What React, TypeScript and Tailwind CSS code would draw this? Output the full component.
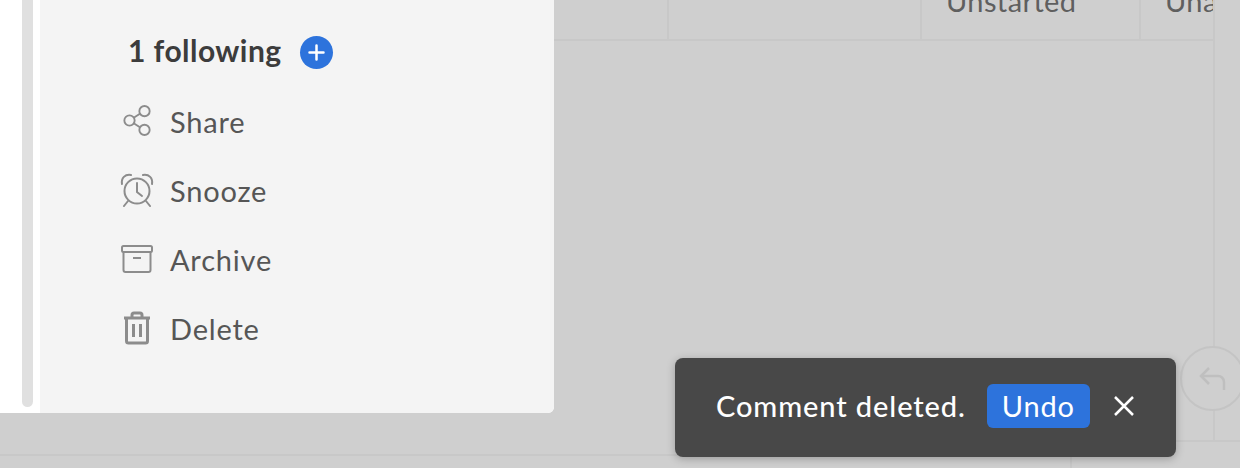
import React from "react";

const font = { fontFamily: '"Lato", "Noto Sans", sans-serif' };

function ShareIcon() {
    return (
        <svg width="30" height="33" viewBox="0 0 32 34" fill="none" stroke="#8c8c8c" strokeWidth="2">
            <circle cx="8" cy="17" r="5.5" />
            <circle cx="24" cy="7" r="5.5" />
            <circle cx="24" cy="27" r="5.5" />
            <path d="M12.5 14 L19.5 9.5 M12.5 20 L19.5 24.5" />
        </svg>
    );
}

function SnoozeIcon() {
    return (
        <svg width="34" height="34" viewBox="0 0 34 34" fill="none" stroke="#8c8c8c" strokeWidth="2" strokeLinecap="round">
            <circle cx="17" cy="18" r="12.5" />
            <path d="M17 10 V19 L22 23" />
            <path d="M2 11 C1 5 5 1 11 2 M32 11 C33 5 29 1 23 2" />
            <path d="M8 28 L4 33 M26 28 L30 33" />
        </svg>
    );
}

function ArchiveIcon() {
    return (
        <svg width="34" height="30" viewBox="0 0 34 30" fill="none" stroke="#8c8c8c" strokeWidth="2">
            <rect x="2" y="2" width="30" height="6" rx="1.5" />
            <path d="M3.5 8 V26 a2 2 0 0 0 2 2 H28.5 a2 2 0 0 0 2 -2 V8" />
            <path d="M13 14 H21" />
        </svg>
    );
}

function TrashIcon() {
    return (
        <svg width="30" height="34" viewBox="0 0 30 34" fill="none" stroke="#8c8c8c" strokeWidth="3">
            <path d="M2 7 H28" />
            <path d="M10 6 V4 a2 2 0 0 1 2 -2 H18 a2 2 0 0 1 2 2 V6" />
            <path d="M4.5 7 V30 a2 2 0 0 0 2 2 H23.5 a2 2 0 0 0 2 -2 V7" />
            <path d="M11.5 13 V26 M18.5 13 V26" />
        </svg>
    );
}

function MenuItem({ icon, label }: { icon: React.ReactNode; label: string }) {
    return (
        <div className="flex items-center h-[69px]">
            <div className="w-[51px] flex justify-center pr-[15px]">{icon}</div>
            <span className="text-[29px] text-[#565656] tracking-[0.8px] relative top-[1px]">{label}</span>
        </div>
    );
}

export default function App() {
    return (
        <div className="relative w-[1240px] h-[468px] overflow-hidden bg-[#cfcfcf]" style={font}>
            {/* table behind the modal */}
            <div className="absolute inset-0 flex">
                <div className="w-[1213px] flex flex-col">
                    <div className="h-[41px] flex border-b-2 border-[#c8c8c8]">
                        <div className="w-[669px] border-r-2 border-[#c8c8c8]" />
                        <div className="w-[253px] border-r-2 border-[#c8c8c8]" />
                        <div className="w-[219px] border-r-2 border-[#c8c8c8] relative">
                            <span className="absolute left-[24px] top-[-21px] text-[29px] text-[#5f5f5f] tracking-[0.4px]">Unstarted</span>
                        </div>
                        <div className="flex-1 relative overflow-hidden">
                            <span className="absolute left-[24px] top-[-21px] text-[29px] text-[#5f5f5f] tracking-[0.4px]">Unassigned</span>
                        </div>
                    </div>
                    <div className="flex-1" />
                    <div className="h-[14px] w-[1100px] flex border-t-2 border-[#c8c8c8]">
                        <div className="w-[1072px] border-r-2 border-[#c8c8c8]" />
                    </div>
                </div>
                <div className="flex-1">
                    <div className="h-[442px] border-l-2 border-b-2 border-[#c8c8c8]" />
                </div>
            </div>
            {/* row line that starts from under the toast */}
            <div className="absolute left-[1100px] top-[440px] w-[113px] h-[2px] bg-[#c8c8c8]" />

            {/* reply button */}
            <div className="absolute left-[1180px] top-[346px] w-[65px] h-[65px] rounded-full border-2 border-[#c4c4c4] bg-[#cfcfcf] flex items-center justify-center">
                <svg width="30" height="30" viewBox="0 0 30 30" fill="none" stroke="#bfbfbf" strokeWidth="2.5">
                    <path d="M11 4 L3 12 L11 20" />
                    <path d="M3 12 H20 a6 6 0 0 1 6 6 V26" />
                </svg>
            </div>

            {/* modal */}
            <div className="absolute left-0 top-0 w-[554px] h-[413px] bg-white rounded-br-[6px] flex overflow-hidden">
                <div className="w-[40px] shrink-0 pl-[22px] pr-[7px] pb-[6px]">
                    <div className="h-full bg-[#e0e0e0] rounded-b-[6px]" />
                </div>
                <div className="flex-1 bg-[#f4f4f4] pl-[79px] pt-[18px]">
                    <div className="flex items-center h-[68px] pl-[9px]">
                        <span className="text-[30px] font-bold text-[#3c3c3c] tracking-[0.45px] relative top-[-2px]">1 following</span>
                        <div className="ml-[18px] w-[33px] h-[33px] rounded-full bg-[#2d73dc] flex items-center justify-center">
                            <svg width="17" height="17" viewBox="0 0 17 17" stroke="#fff" strokeWidth="2.5" strokeLinecap="round">
                                <path d="M8.5 1.5 V15.5 M1.5 8.5 H15.5" />
                            </svg>
                        </div>
                    </div>
                    <MenuItem icon={<ShareIcon />} label="Share" />
                    <MenuItem icon={<SnoozeIcon />} label="Snooze" />
                    <MenuItem icon={<ArchiveIcon />} label="Archive" />
                    <MenuItem icon={<TrashIcon />} label="Delete" />
                </div>
            </div>

            {/* toast */}
            <div className="absolute left-[675px] top-[358px] w-[501px] h-[99px] rounded-[8px] bg-[#484848] shadow-[0_2px_8px_rgba(0,0,0,0.25)] flex items-center pl-[41px]">
                <span className="text-[29px] text-white tracking-[0.9px] font-medium relative top-[-2px]">Comment deleted.</span>
                <button className="ml-[21px] w-[103px] h-[44px] rounded-[6px] bg-[#2d73dc] text-white text-[29px] tracking-[0.8px] flex items-center justify-center relative top-[-2px]">Undo</button>
                <svg className="ml-[23px] relative top-[-2px]" width="22" height="22" viewBox="0 0 22 22" stroke="#fff" strokeWidth="2.5">
                    <path d="M2 2 L20 20 M20 2 L2 20" />
                </svg>
            </div>
        </div>
    );
}
